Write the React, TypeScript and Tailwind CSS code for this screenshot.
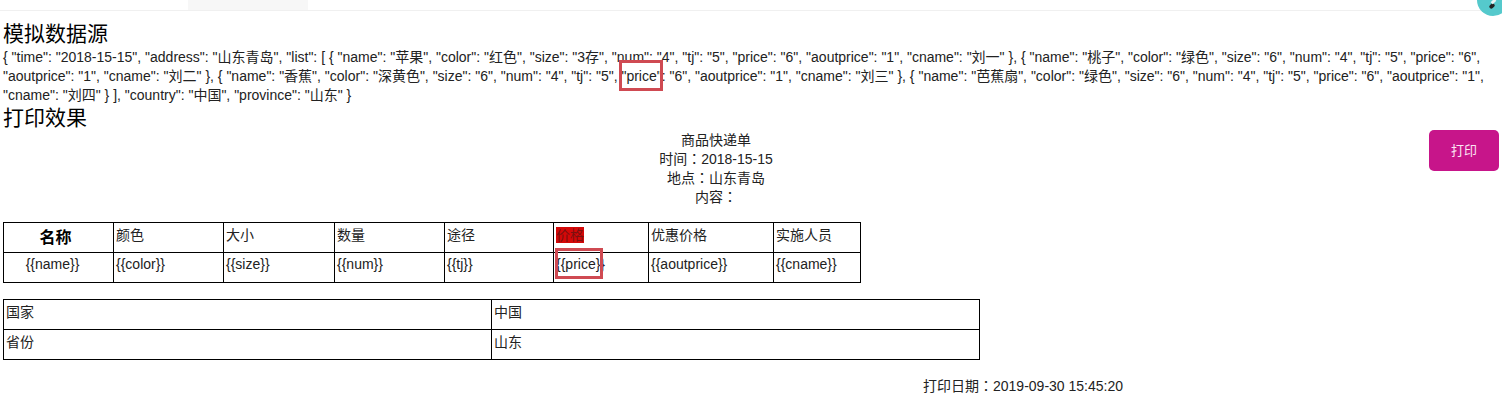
import React from 'react';

const dataSource =
  '{ "time": "2018-15-15", "address": "山东青岛", "list": [ { "name": "苹果", "color": "红色", "size": "3存", "num": "4", "tj": "5", "price": "6", "aoutprice": "1", "cname": "刘一" }, { "name": "桃子", "color": "绿色", "size": "6", "num": "4", "tj": "5", "price": "6", "aoutprice": "1", "cname": "刘二" }, { "name": "香蕉", "color": "深黄色", "size": "6", "num": "4", "tj": "5", "price": "6", "aoutprice": "1", "cname": "刘三" }, { "name": "芭蕉扇", "color": "绿色", "size": "6", "num": "4", "tj": "5", "price": "6", "aoutprice": "1", "cname": "刘四" } ], "country": "中国", "province": "山东" }';

const columns = [
  { label: '颜色', value: '{{color}}', width: 'w-[110px]' },
  { label: '大小', value: '{{size}}', width: 'w-[111px]' },
  { label: '数量', value: '{{num}}', width: 'w-[110px]' },
  { label: '途径', value: '{{tj}}', width: 'w-[109px]' },
  { label: '价格', value: '{{price}}', width: 'w-[95px]', mark: true },
  { label: '优惠价格', value: '{{aoutprice}}', width: 'w-[125px]' },
  { label: '实施人员', value: '{{cname}}', width: 'w-[87px]' },
];

// full width colon sits centred in the reference
const Colon = () => <span className="leading-[0] [font-family:'Noto_Sans_CJK_TC',sans-serif]">：</span>;

export default function App() {
  return (
    <div className="relative h-[409px] w-[1502px] overflow-hidden bg-white text-[14px] leading-[19px] text-[#222] [font-family:'Liberation_Sans','Noto_Sans_CJK_SC',sans-serif]">
      {/* Top tab strip */}
      <div className="h-[11px] border-b border-[#f0f0f0] pl-[188px]">
        <div className="h-[10px] w-[120px] bg-[#f7f7f7]" />
      </div>

      {/* Floating avatar */}
      <div className="absolute left-[1477px] top-[-16px] flex h-[32px] w-[32px] items-center justify-center rounded-full bg-[#55c9cc]">
        <span className="absolute left-[13px] top-[19px] h-[6px] w-[4px] rotate-45 rounded-full bg-[#222]" />
        <span className="absolute left-[15px] top-[15px] h-[5px] w-[3px] rotate-45 bg-[#e8f4f4]" />
      </div>

      <div className="pl-[3px] pr-[8px]">
        <h3 className="mt-[10px] text-[21px] leading-[26px] text-black">模拟数据源</h3>
        <p className="mt-[1px]">{dataSource}</p>
        <h3 className="text-[21px] leading-[26px] text-black">打印效果</h3>

        <div className="flex">
          <div className="flex-1 text-center">
            <div>商品快递单</div>
            <div>
              时间
              <Colon />
              2018-15-15
            </div>
            <div>
              地点
              <Colon />
              山东青岛
            </div>
            <div>
              内容
              <Colon />
            </div>
          </div>
          <button className="mt-[-1px] mr-[-5px] h-[41px] w-[70px] rounded-[5px] bg-[#c7158a] text-[13px] text-[#fbe4f3]">
            打印
          </button>
        </div>

        <table className="mt-[15px] border-collapse border border-black text-left">
          <tbody>
            <tr className="h-[30px]">
              <th className="w-[110px] border border-black pr-[6px] text-center align-middle text-[16px] font-bold text-black">
                名称
              </th>
              {columns.map((col) => (
                <td key={col.label} className={`${col.width} border border-black px-[2px] pb-[5px] align-middle`}>
                  {col.mark ? <span className="bg-[#d40808] text-[#7a1010]">{col.label}</span> : col.label}
                </td>
              ))}
            </tr>
            <tr className="h-[30px]">
              <td className="border border-black pr-[12px] pb-[6px] text-center align-middle">{'{{name}}'}</td>
              {columns.map((col) => (
                <td key={col.label} className="border border-black px-[2px] pb-[6px] align-middle">
                  {col.value}
                </td>
              ))}
            </tr>
          </tbody>
        </table>

        <table className="mt-[16px] w-[977px] border-collapse border border-black text-left">
          <tbody>
            <tr className="h-[30px]">
              <td className="w-[488px] border border-black px-[2px] pb-[5px] align-middle">国家</td>
              <td className="border border-black px-[2px] pb-[5px] align-middle">中国</td>
            </tr>
            <tr className="h-[30px]">
              <td className="border border-black px-[2px] pb-[5px] align-middle">省份</td>
              <td className="border border-black px-[2px] pb-[5px] align-middle">山东</td>
            </tr>
          </tbody>
        </table>

        <div className="mt-[17px] pl-[920px]">
          打印日期
          <Colon />
          2019-09-30 15:45:20
        </div>
      </div>

      {/* Red annotation boxes */}
      <div className="absolute left-[619px] top-[60px] h-[31px] w-[44px] border-[3px] border-[#cf4a52]" />
      <div className="absolute left-[555px] top-[248px] h-[31px] w-[48px] border-[3px] border-[#cf4a52]" />
    </div>
  );
}
